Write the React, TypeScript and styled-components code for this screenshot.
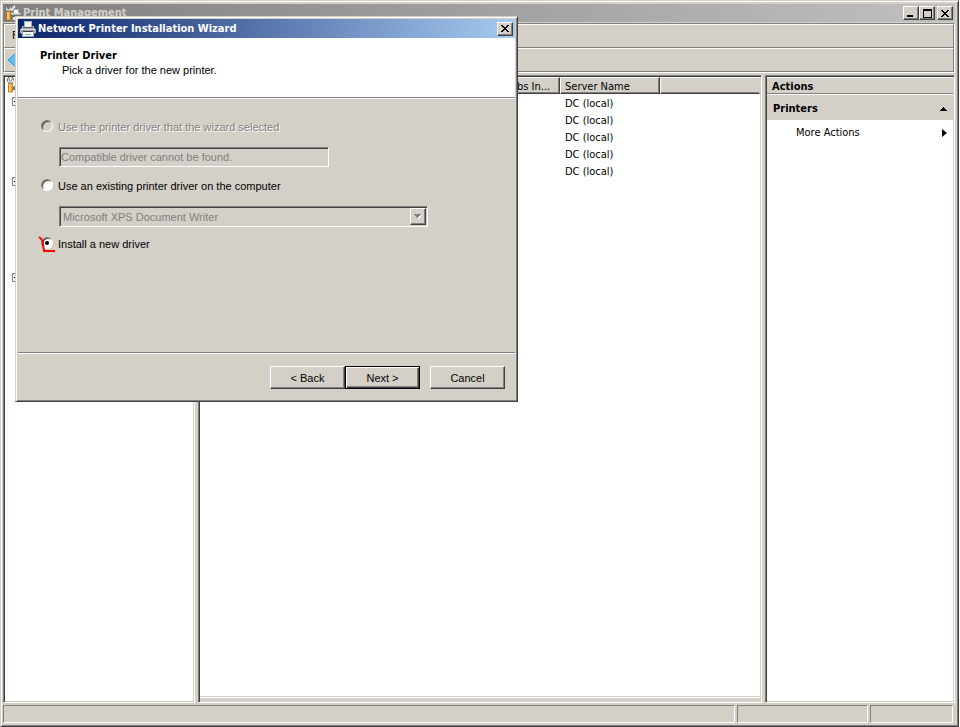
import React from "react";
import styled, { createGlobalStyle, css } from "styled-components";

const FACE = "#d4d0c8";
const SHADOW = "#808080";
const DARK = "#404040";

const uiFont = `"DejaVu Sans Condensed", "Noto Sans", sans-serif`;
const dialogFont = `"Liberation Sans", Arial, sans-serif`;

const Global = createGlobalStyle`
  * { box-sizing: border-box; }
  body { margin: 0; background: #fff; color: #000; font: 11px/16px ${uiFont}; }
  button, input, select { font: inherit; color: inherit; margin: 0; }
`;

const raised = css`
  border: 1px solid;
  border-color: #fff ${DARK} ${DARK} #fff;
  box-shadow: inset -1px -1px ${SHADOW};
`;

const sunken = css`
  border: 1px solid;
  border-color: ${SHADOW} #fff #fff ${SHADOW};
  box-shadow: inset 1px 1px ${DARK}, inset -1px -1px ${FACE};
`;

const frame = css`
  border: 1px solid;
  border-color: ${FACE} ${DARK} ${DARK} ${FACE};
  box-shadow: inset 1px 1px #fff, inset -1px -1px ${SHADOW};
  background: ${FACE};
`;

const Window = styled.main`
  ${frame}
  position: relative;
  display: flex;
  flex-direction: column;
  min-height: 100vh;
  margin-right: 1px;
  padding: 3px 3px 3px 2px;
`;

const TitleBar = styled.header<{ $active?: boolean }>`
  display: flex;
  align-items: center;
  height: ${(p) => (p.$active ? "19px" : "18px")};
  padding: 0 2px;
  gap: 2px;
  color: ${(p) => (p.$active ? "#fff" : FACE)};
  background: ${(p) =>
    p.$active
      ? "linear-gradient(90deg, #0a246a, #a6caf0)"
      : "linear-gradient(90deg, #808080, #c0c0c0)"};
`;

const Title = styled.h1`
  flex: 1;
  margin: 0;
  font-size: 11px;
  font-weight: bold;
  line-height: 16px;
  white-space: nowrap;
`;

const CaptionButtons = styled.div`
  display: flex;
`;

const CaptionButton = styled.button<{ $apart?: boolean }>`
  ${raised}
  display: grid;
  place-items: center;
  width: 16px;
  height: 14px;
  padding: 0;
  margin-left: ${(p) => (p.$apart ? "2px" : "0")};
  background: ${FACE};
`;

const Bars = styled.div`
  margin-top: 1px;
  border: 1px solid;
  border-color: ${SHADOW} #fff #fff ${SHADOW};
`;

const Bar = styled.nav`
  display: flex;
  align-items: center;
  height: 24px;
  padding: 0 7px;
  border: 1px solid;
  border-color: #fff ${SHADOW} ${SHADOW} #fff;
`;

const ToolBar = styled(Bar)`
  padding: 0 2px;
`;

const BarButton = styled.button`
  display: flex;
  padding: 0;
  border: 0;
  background: none;
`;

const Panes = styled.div`
  flex: 1;
  display: grid;
  grid-template-columns: 192px minmax(0, 1fr) 190px;
  gap: 3px;
  margin-top: 2px;
`;

const Pane = styled.section`
  ${sunken}
  padding: 1px;
  background: #fff;
`;

const TreeList = styled.ul`
  list-style: none;
  margin: 0;
  padding: 0;
`;

const TreeRow = styled.li<{ $root?: boolean }>`
  display: flex;
  align-items: center;
  height: 16px;
  padding-left: ${(p) => (p.$root ? "2px" : "7px")};
`;

const Expander = styled.button`
  display: grid;
  place-items: center;
  width: 9px;
  height: 9px;
  padding: 0;
  border: 1px solid ${SHADOW};
  background: #fff;
`;

const ListPane = styled(Pane)`
  display: flex;
  flex-direction: column;
`;

const ListArea = styled.div`
  flex: 1;
`;

const ListFoot = styled.div`
  height: 4px;
  border-top: 1px solid #fff;
  background: ${FACE};
  box-shadow: 0 -1px ${FACE};
`;

const PrinterTable = styled.table`
  width: 100%;
  table-layout: fixed;
  border-collapse: separate;
  border-spacing: 0;
`;

const ColumnHead = styled.th<{ $last?: boolean }>`
  height: 17px;
  padding: 2px 4px 0;
  text-align: left;
  font-weight: normal;
  line-height: 13px;
  white-space: nowrap;
  background: ${FACE};
  border: 1px solid;
  border-color: #fff ${(p) => (p.$last ? FACE : DARK)} ${DARK} #fff;
  box-shadow: inset ${(p) => (p.$last ? "0" : "-1px")} -1px ${SHADOW};
`;

const Cell = styled.td`
  height: 17px;
  padding: 2px 5px 0;
  line-height: 15px;
`;

const ActionsHead = styled.h2`
  height: 17px;
  margin: 0;
  padding-left: 5px;
  font-size: 11px;
  line-height: 17px;
  background: ${FACE};
  border-top: 1px solid #fff;
  border-bottom: 1px solid ${SHADOW};
`;

const ActionGroup = styled.button`
  display: flex;
  justify-content: space-between;
  align-items: center;
  width: 100%;
  height: 26px;
  padding: 2px 5px 0 6px;
  border: 0;
  border-top: 1px solid #fff;
  background: ${FACE};
  font-weight: bold;
`;

const ActionItem = styled.button`
  display: flex;
  justify-content: space-between;
  align-items: center;
  width: 100%;
  height: 25px;
  padding: 1px 6px 0 29px;
  border: 0;
  background: #fff;
`;

const StatusBar = styled.footer`
  display: grid;
  grid-template-columns: minmax(0, 1fr) 131px 83px;
  gap: 2px;
  margin-top: 2px;
  padding-right: 2px;
`;

const StatusCell = styled.div`
  height: 18px;
  border: 1px solid;
  border-color: ${SHADOW} #fff #fff ${SHADOW};
`;

const Dialog = styled.section`
  ${frame}
  position: absolute;
  left: 14px;
  top: 15px;
  width: 503px;
  padding: 2px;
  font-family: ${dialogFont};
`;

const DialogTitle = styled(TitleBar)`
  font-family: ${uiFont};
`;

const Intro = styled.div`
  height: 60px;
  padding: 10px 22px;
  background: #fff;
  border-bottom: 1px solid ${SHADOW};
  box-shadow: 0 1px #fff;
`;

const IntroTitle = styled.h2`
  margin: 0;
  font: bold 11px/15px ${uiFont};
`;

const IntroText = styled.p`
  margin: 0;
  padding-left: 22px;
  line-height: 15px;
`;

const Form = styled.form`
  min-height: 254px;
  padding: 21px 22px 0;
`;

const Choice = styled.label<{ $off?: boolean }>`
  position: relative;
  display: flex;
  gap: 5px;
  width: max-content;
  color: ${(p) => (p.$off ? SHADOW : "#000")};
  text-shadow: ${(p) => (p.$off ? "1px 1px #fff" : "none")};
`;

const Radio = styled.input`
  appearance: none;
  display: grid;
  place-items: center;
  width: 12px;
  height: 12px;
  margin: 1px 0 0 1px;
  border: 1px solid;
  border-color: ${SHADOW} #fff #fff ${SHADOW};
  border-radius: 50%;
  background: #fff;
  box-shadow: inset 1px 1px ${DARK};
  &:disabled { background: ${FACE}; }
  &:checked::before {
    content: "";
    width: 4px;
    height: 4px;
    border-radius: 2px;
    background: #000;
  }
`;

const DriverField = styled.input`
  ${sunken}
  display: block;
  width: 270px;
  height: 20px;
  margin: 12px 0 11px 19px;
  padding: 0 1px;
  background: ${FACE};
  &:disabled { color: ${SHADOW}; }
`;

const SelectWrap = styled.div`
  position: relative;
  width: 369px;
  margin: 12px 0 9px 19px;
`;

const DriverSelect = styled.select`
  ${sunken}
  appearance: none;
  display: block;
  width: 100%;
  height: 21px;
  padding: 0 3px;
  border-radius: 0;
  background: ${FACE};
  &:disabled { color: ${SHADOW}; opacity: 1; }
`;

const SelectArrow = styled.span`
  ${raised}
  position: absolute;
  top: 2px;
  right: 2px;
  display: grid;
  place-items: center;
  width: 16px;
  height: 17px;
  background: ${FACE};
  pointer-events: none;
`;

const RedMark = styled.svg`
  position: absolute;
  left: -2px;
  top: -1px;
`;

const Actions = styled.footer`
  display: flex;
  justify-content: flex-end;
  padding: 13px 10px 10px;
  border-top: 1px solid ${SHADOW};
  box-shadow: inset 0 1px #fff;
`;

const PushButton = styled.button<{ $default?: boolean; $apart?: boolean }>`
  ${raised}
  width: 75px;
  height: 23px;
  margin-left: ${(p) => (p.$apart ? "10px" : "0")};
  padding: 0;
  background: ${FACE};
  ${(p) =>
    p.$default &&
    css`
      border-color: #000;
      box-shadow: inset 1px 1px #fff, inset -1px -1px ${DARK}, inset -2px -2px ${SHADOW};
    `}
`;

const PrinterIcon = () => (
  <svg width="16" height="16" viewBox="0 0 16 16" shapeRendering="crispEdges" aria-hidden="true">
    <path d="M4 0h8v6H4z" fill="#a8acb2" />
    <path d="M5 1h6v5H5z" fill="#f4f6f8" />
    <path d="M2 5h2v1h8V5h2v2h1v1h1v4h-1v1H1v-1H0V8h1V7h1z" fill="#a9adb3" />
    <path d="M3 6h10v1H3z" fill="#5c6168" />
    <path d="M1 8h14v1H1z" fill="#d6d8db" />
    <path d="M1 9h14v2H1z" fill="#9da1a7" />
    <path d="M3 10h10v1H3z" fill="#3b3f46" />
    <path d="M2 12h12v4H2z" fill="#9a9ea4" />
    <path d="M3 11h10v4H3z" fill="#f4f6f8" />
    <path d="M5 13h4v1H5z" fill="#6aa7dc" />
    <path d="M9 13h2v1H9z" fill="#7cc07c" />
  </svg>
);

const ToolsIcon = () => (
  <svg width="16" height="16" viewBox="0 0 16 16" aria-hidden="true">
    <path d="M8.500 4.500h5v4h-5z" fill="#fff" stroke="#aaa" />
    <path d="M6 8h9.500v5H6z" fill="#6f747b" />
    <path d="M6 8h9.500v1.500H6z" fill="#e2e4e7" />
    <path d="M8 12h7v3H8z" fill="#fff" stroke="#888" strokeWidth=".5" />
    <path d="M.5 1.500v3l2 1.500h3L6.500 4V1.500L5 0v3L3.500 4 2 3V0z" fill="#eef0f2" stroke="#555" strokeWidth=".8" />
    <path d="M6 5.500L10 1" stroke="#e4e4e4" strokeWidth="2" />
    <path d="M1.500 6.500h4v8.500h-4z" fill="#f2ae22" stroke="#a46f0a" strokeWidth=".8" />
    <path d="M3 7v7.500" stroke="#ffe08a" />
  </svg>
);

const CloseGlyph = () => (
  <svg width="8" height="7" viewBox="0 0 8 7" shapeRendering="crispEdges" aria-hidden="true">
    <path d="M0 0h2v1h1v1h2v-1h1v-1h2v1h-1v1h-1v1h-1v1h1v1h1v1h1v1h-2v-1h-1v-1h-2v1h-1v1h-2v-1h1v-1h1v-1h1v-1h-1v-1h-1v-1h-1z" />
  </svg>
);

const treeRows = ["root", "open", "", "", "", "", "open", "", "", "", "", "", "open"];
const servers = ["DC (local)", "DC (local)", "DC (local)", "DC (local)", "DC (local)"];

export default function App() {
  return (
    <>
      <Global />
      <Window>
        <TitleBar>
          <ToolsIcon />
          <Title>Print Management</Title>
          <CaptionButtons>
            <CaptionButton aria-label="Minimize">
              <svg width="8" height="8" shapeRendering="crispEdges"><path d="M0 6h6v2H0z" /></svg>
            </CaptionButton>
            <CaptionButton aria-label="Maximize">
              <svg width="9" height="9" shapeRendering="crispEdges"><path d="M0 0h9v9H0zM1 2v6h7V2z" fillRule="evenodd" /></svg>
            </CaptionButton>
            <CaptionButton aria-label="Close" $apart><CloseGlyph /></CaptionButton>
          </CaptionButtons>
        </TitleBar>

        <Bars>
          <Bar><BarButton>File</BarButton></Bar>
          <ToolBar>
            <BarButton aria-label="Back">
              <svg width="16" height="16"><path d="M1 8l8-7v4h6v6H9v4z" fill="#5cc0f4" stroke="#2d8fd0" /></svg>
            </BarButton>
          </ToolBar>
        </Bars>

        <Panes>
          <Pane>
            <TreeList>
              {treeRows.map((kind, i) => (
                <TreeRow key={i} $root={kind === "root"}>
                  {kind === "root" && <ToolsIcon />}
                  {kind === "open" && (
                    <Expander aria-label="Collapse">
                      <svg width="5" height="1"><path d="M0 0h5v1H0z" /></svg>
                    </Expander>
                  )}
                </TreeRow>
              ))}
            </TreeList>
          </Pane>

          <ListPane>
            <ListArea>
              <PrinterTable>
                <colgroup>
                  <col style={{ width: 303 }} />
                  <col style={{ width: 57 }} />
                  <col style={{ width: 100 }} />
                  <col />
                </colgroup>
                <thead>
                  <tr>
                    <ColumnHead />
                    <ColumnHead>Jobs In...</ColumnHead>
                    <ColumnHead>Server Name</ColumnHead>
                    <ColumnHead $last />
                  </tr>
                </thead>
                <tbody>
                  {servers.map((name, i) => (
                    <tr key={i}><Cell /><Cell /><Cell>{name}</Cell><Cell /></tr>
                  ))}
                </tbody>
              </PrinterTable>
            </ListArea>
            <ListFoot />
          </ListPane>

          <Pane>
            <ActionsHead>Actions</ActionsHead>
            <ActionGroup>
              Printers
              <svg width="8" height="4" shapeRendering="crispEdges"><path d="M3 0h1v1h1v1h1v1h1v1H0V3h1V2h1V1h1z" /></svg>
            </ActionGroup>
            <ActionItem>
              More Actions
              <svg width="5" height="8"><path d="M0 0l5 4-5 4z" /></svg>
            </ActionItem>
          </Pane>
        </Panes>

        <StatusBar>
          <StatusCell />
          <StatusCell />
          <StatusCell />
        </StatusBar>

        <Dialog role="dialog" aria-labelledby="wizard-title">
          <DialogTitle $active>
            <PrinterIcon />
            <Title id="wizard-title">Network Printer Installation Wizard</Title>
            <CaptionButton aria-label="Close"><CloseGlyph /></CaptionButton>
          </DialogTitle>
          <Intro>
            <IntroTitle>Printer Driver</IntroTitle>
            <IntroText>Pick a driver for the new printer.</IntroText>
          </Intro>
          <Form id="driver-form" onSubmit={(e) => e.preventDefault()}>
            <Choice $off>
              <Radio type="radio" name="driver" disabled />
              Use the printer driver that the wizard selected
            </Choice>
            <DriverField aria-label="Selected driver" disabled value="Compatible driver cannot be found." readOnly />
            <Choice>
              <Radio type="radio" name="driver" />
              Use an existing printer driver on the computer
            </Choice>
            <SelectWrap>
              <DriverSelect aria-label="Existing driver" disabled>
                <option>Microsoft XPS Document Writer</option>
              </DriverSelect>
              <SelectArrow>
                <svg width="8" height="5" shapeRendering="crispEdges">
                  <path d="M1 1h7v1H7v1H6v1H5v1H4V4H3V3H2V2H1z" fill="#fff" />
                  <path d="M0 0h7v1H6v1H5v1H4v1H3V3H2V2H1V1H0z" fill={SHADOW} />
                </svg>
              </SelectArrow>
            </SelectWrap>
            <Choice>
              <Radio type="radio" name="driver" defaultChecked />
              Install a new driver
              <RedMark width="20" height="20" aria-hidden="true">
                <path d="M1 2C4 4 5 6 5 9L6 16H17" fill="none" stroke="#f00" strokeWidth="2" />
              </RedMark>
            </Choice>
          </Form>
          <Actions>
            <PushButton type="button">&lt; Back</PushButton>
            <PushButton type="submit" form="driver-form" $default>Next &gt;</PushButton>
            <PushButton type="button" $apart>Cancel</PushButton>
          </Actions>
        </Dialog>
      </Window>
    </>
  );
}
